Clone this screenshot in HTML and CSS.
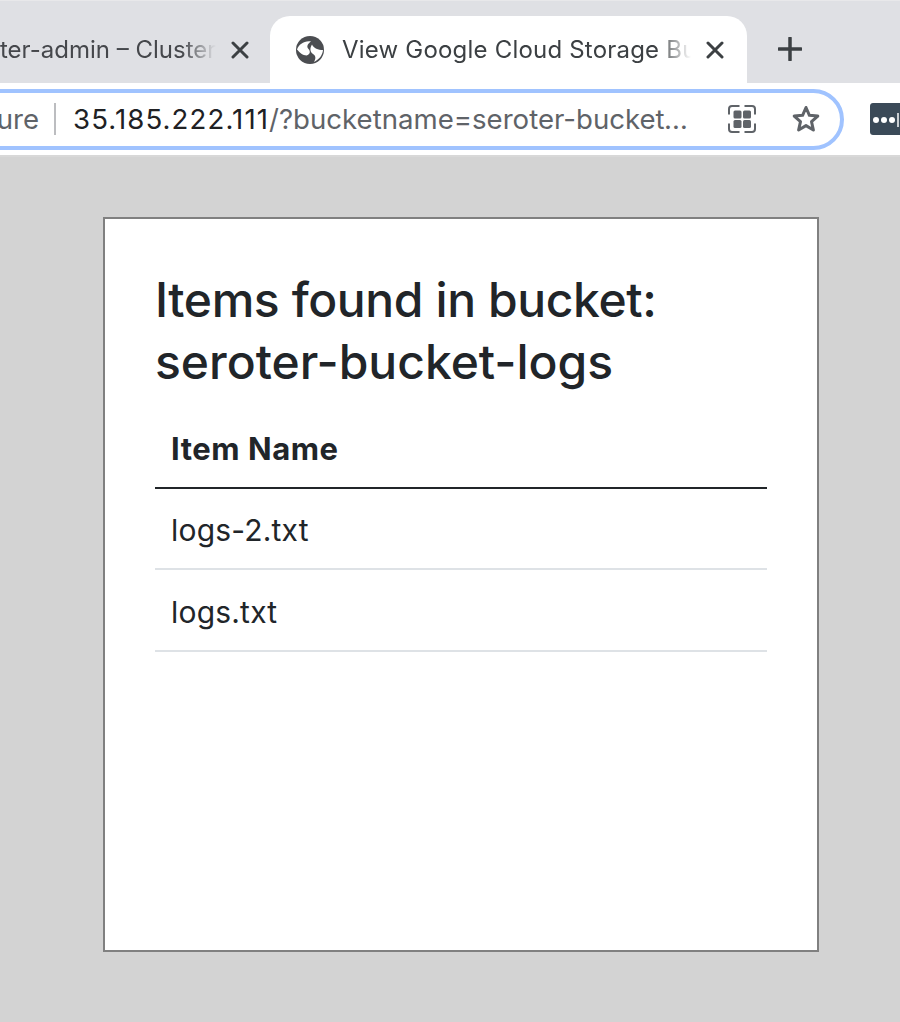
FILE: index.html
```html
<!DOCTYPE html>
<html lang="en">
<head>
<meta charset="utf-8">
<title>View Google Cloud Storage Bucket</title>
<link rel="stylesheet" href="styles.css">
</head>
<body>
<header class="chrome">
  <div class="tabstrip">
    <div class="tab tab-inactive">
      <span class="tab-title tab-title-inactive">ter-admin – Cluster</span>
      <svg class="tab-close" viewBox="0 0 18 18"><path d="M2 2L16 16M16 2L2 16"/></svg>
    </div>
    <div class="tab tab-active">
      <svg class="globe" viewBox="0 0 28 28"><circle cx="14" cy="14" r="14" fill="#4b4d51"/><path fill="#fff" d="M1 13.500C3 8.500 8 4.500 15 5.500c-3 2-5 5-2.500 7.500 2 2 2 5.500-2 6.500-3.500 0-7-3-9.500-6zM16 8.500c2 4 6 5.500 11 5.500-.5 5.500-4 9.500-9 12 2-3.500 2-6-1-8-3.500-2.500-3-6.500-1-9.500z"/></svg>
      <span class="tab-title">View Google Cloud Storage Bucket</span>
      <svg class="tab-close" viewBox="0 0 18 18"><path d="M2 2L16 16M16 2L2 16"/></svg>
    </div>
    <svg class="new-tab" viewBox="0 0 24 24"><path d="M12 1V23M1 12H23"/></svg>
  </div>
  <div class="toolbar">
    <div class="omnibox">
      <span class="security">Not secure</span>
      <span class="divider"></span>
      <span class="url"><span class="host">35.185.222.111</span>/?bucketname=seroter-bucket-logs</span>
      <svg class="omni-icon grid-icon" viewBox="0 0 28 28">
        <path class="frame" d="M1 9.500V4C1 2.300 2.300 1 4 1H11.500M16.500 1H24C25.700 1 27 2.300 27 4V9.500M1 18.500V24C1 25.700 2.300 27 4 27H11.500M16.500 27H24C25.700 27 27 25.700 27 24V18.500"/>
        <rect x="5.500" y="5.500" width="8" height="8" rx="1.500"/><rect x="15" y="5.500" width="8" height="8" rx="1.500"/><rect x="5.500" y="15" width="8" height="8" rx="1.500"/><rect x="15" y="15" width="8" height="8" rx="1.500"/>
      </svg>
      <svg class="omni-icon star-icon" viewBox="0 0 28 28"><path d="M14 2.500l3.400 7.800 8.400.8-6.300 5.600 1.900 8.300-7.400-4.400-7.400 4.400 1.900-8.300-6.300-5.600 8.400-.8z"/></svg>
    </div>
    <svg class="extension" viewBox="0 0 30 32"><path fill="#3b4a58" d="M3 0H30V32H3C1.300 32 0 30.700 0 29V3C0 1.300 1.300 0 3 0z"/><circle cx="6" cy="17" r="3" fill="#fff"/><circle cx="14" cy="17" r="3" fill="#fff"/><circle cx="22" cy="17" r="3" fill="#fff"/><rect x="27" y="10" width="2" height="14" fill="#c9ced2"/></svg>
  </div>
</header>
<main class="page">
  <section class="card">
    <h1 class="title"><span class="title-line">Items found in bucket:</span> <span class="title-line title-name">seroter-bucket-logs</span></h1>
    <table class="items">
      <thead><tr><th>Item Name</th></tr></thead>
      <tbody>
        <tr><td>logs-2.txt</td></tr>
        <tr><td>logs.txt</td></tr>
      </tbody>
    </table>
  </section>
</main>
</body>
</html>
```
FILE: styles.css
```css
* { box-sizing: border-box; }
html, body { margin: 0; padding: 0; }
body {
  width: 900px;
  height: 1022px;
  overflow: hidden;
  background: #d3d3d3;
  font-family: Inter, "Liberation Sans", sans-serif;
  display: flex;
  flex-direction: column;
}
.chrome { flex: none; background: #fff; border-bottom: 2px solid #d8d8d8; }
.tabstrip {
  height: 83px;
  background: #dfe0e4;
  border-top: 1px solid #e8e8ea;
  padding-top: 15px;
  display: flex;
  align-items: flex-start;
}
.tab { display: flex; align-items: center; height: 67px; flex: none; }
.tab-inactive { width: 270px; padding-right: 21px; justify-content: flex-end; }
.tab-active {
  width: 477px;
  background: #fff;
  border-radius: 20px 20px 0 0;
  padding: 0 23px 0 26px;
  height: 68px;
}
.tab-title {
  font-size: 24px;
  line-height: 36px;
  color: #3c4043;
  white-space: nowrap;
  overflow: hidden;
  flex: 1;
  min-width: 0;
  -webkit-mask-image: linear-gradient(to right, #000 calc(100% - 36px), transparent calc(100% - 2px));
  mask-image: linear-gradient(to right, #000 calc(100% - 36px), transparent calc(100% - 2px));
}
.tab-title-inactive { direction: rtl; text-align: left; margin-right: 13px; color: #45474b; }
.tab-active .tab-title { margin-right: 13px; letter-spacing: 0.2px; }
.globe { width: 28px; height: 28px; flex: none; margin-right: 18px; }
.tab-close { width: 18px; height: 18px; flex: none; fill: none; stroke: #3c4043; stroke-width: 3; stroke-linecap: round; }
.new-tab { width: 24px; height: 24px; margin: 21px 0 0 31px; fill: none; stroke: #3c4043; stroke-width: 3.500; stroke-linecap: round; flex: none; }
.toolbar {
  height: 72px;
  display: flex;
  align-items: center;
}
.omnibox {
  margin-left: -40px;
  width: 884px;
  height: 61px;
  flex: none;
  border: 4px solid #a0c3ff;
  border-radius: 31px;
  background: #fff;
  display: flex;
  align-items: center;
  font-size: 27.600px;
  color: #5f6368;
  white-space: nowrap;
}
.security { width: 75px; text-align: right; direction: rtl; overflow: hidden; flex: none; }
.divider { width: 2px; height: 32px; background: #bcbdc0; margin: 0 17px 0 15px; flex: none; }
.url { width: 618px; overflow: hidden; text-overflow: ellipsis; flex: none; }
.host { color: #202124; letter-spacing: 1.100px; }
.omni-icon { flex: none; width: 28px; height: 28px; }
.grid-icon { margin-left: 37px; fill: #5f6368; }
.grid-icon .frame { fill: none; stroke: #5f6368; stroke-width: 2; }
.star-icon { margin-left: 36px; fill: none; stroke: #5f6368; stroke-width: 3; stroke-linejoin: round; }
.extension { margin-left: 26px; width: 30px; height: 32px; flex: none; }
.page { flex: 1; padding: 60px 0 0 103.300px; }
.card {
  width: 715.400px;
  height: 735px;
  background: #fff;
  border: 2px solid #808080;
  padding: 50px 49.700px 0;
  color: #212529;
}
.title { margin: 0 0 13px; font-size: 48px; line-height: 62px; font-weight: 500; letter-spacing: -0.4px; }
.title-line { display: block; }
.title-name { letter-spacing: 0; }
.items { width: 612px; border-collapse: collapse; font-size: 30px; }
.items th, .items td { text-align: left; padding: 4px 16px 0; height: 81.500px; }
.items th { font-size: 31px; letter-spacing: 0.55px; font-weight: 700; border-bottom: 2px solid #212529; }
.items td { font-weight: 400; letter-spacing: 0.2px; border-bottom: 2px solid #dee2e6; }
```
